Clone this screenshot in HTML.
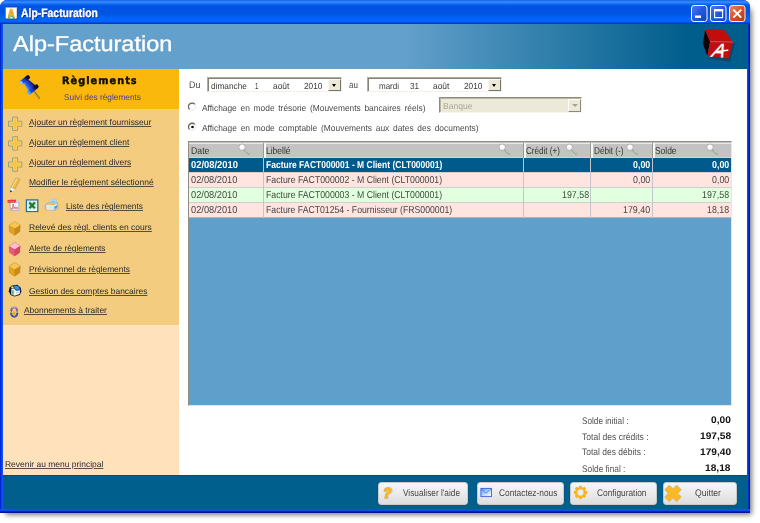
<!DOCTYPE html>
<html lang="fr">
<head>
<meta charset="utf-8">
<title>Alp-Facturation</title>
<style>
html,body{margin:0;padding:0;}
body{width:760px;height:523px;overflow:hidden;background:#fff;position:relative;
 font-family:"Liberation Sans",sans-serif;font-size:10px;color:#333;}
.a{position:absolute;}
.t{position:absolute;white-space:nowrap;text-rendering:geometricPrecision;line-height:12px;height:12px;transform-origin:0 0;}
#shadow{left:5px;top:6px;width:746.5px;height:508.5px;border-radius:6px 8px 3px 3px;background:rgba(0,0,0,.5);filter:blur(2.6px);}
#win{left:0;top:0;width:750px;height:513px;border-radius:7px 7px 0 0;overflow:hidden;
 background:linear-gradient(90deg,#0019cf 0,#0831d9 1px,#0a55ea 2px,#0a55ea 3px,#0a55ea 747px,#0940e0 748px,#001ac0 749px,#00138c 750px);}
#bbot{left:0;top:509px;width:750px;height:4px;background:linear-gradient(#0a55ea 0,#0a50e6 40%,#0325c4 62%,#001088 100%);}
#titlebar{left:0;top:0;width:750px;height:24px;
 background:linear-gradient(#1a60e8 0,#3390ff 9%,#0f66f2 17%,#0055e5 26%,#0054e0 55%,#005ef0 68%,#0066ff 80%,#0062f8 90%,#0040d8 96%,#002fbe 100%);}
#header{left:3px;top:24px;width:744px;height:45px;background:linear-gradient(90deg,#63a0cb 0,#63a0cb 54%,#005e8c 92%,#005e8c 100%);}
#left{left:3px;top:69px;width:176px;height:406px;background:#ffe2bc;}
#lhead{left:0;top:0;width:176px;height:40px;background:#fbb80c;}
#lmenu{left:0;top:40px;width:176px;height:216px;background:#f3cc80;}
#main{left:179px;top:69px;width:568px;height:406px;background:#fff;}
#footer{left:3px;top:475px;width:744px;height:34px;background:#005f8c;border-top:1px solid #004a8c;box-sizing:border-box;}
.date{height:15px;box-sizing:border-box;background:#fff;border:1px solid;border-color:#b3b0a0 #f4f2e8 #f4f2e8 #b3b0a0;box-shadow:inset 1px 1px 0 #84827a;}
.dbtn{width:13px;height:12px;box-sizing:border-box;background:#ece9d8;border:1px solid;border-color:#fbfaf4 #77756a #77756a #fbfaf4;}
.dbtn:after{content:"";position:absolute;left:3px;top:4px;border:2.5px solid transparent;border-top:3px solid #000;border-bottom:0;}
.radio{width:9px;height:9px;border-radius:50%;box-sizing:border-box;background:#fff;border:1px solid;border-color:#77776c #e8e6da #e8e6da #77776c;box-shadow:inset .6px .6px 0 #55554a;}
.btn{top:481.5px;height:23.5px;box-sizing:border-box;border-radius:3px;border:1px solid #c9c9c9;background:linear-gradient(#f6f6f6 0,#ececec 45%,#dddddd 100%);box-shadow:0 0 1px rgba(0,40,70,.6);}
.row{left:189px;width:542px;height:15px;}
.vl{top:158px;width:1px;height:60px;background:#c4c4cc;}
.hl{left:189px;width:542px;height:1px;background:#cfcfcf;}
.hs{top:143px;width:3px;height:15px;background:linear-gradient(90deg,#979797 0,#979797 1px,#f6f6f6 1px);}
</style>
</head>
<body>
<div id="shadow" class="a"></div>
<div id="win" class="a">
 <div id="bbot" class="a"></div>
 <div id="titlebar" class="a"></div>
 <div id="header" class="a"></div>
 <div id="left" class="a">
  <div id="lhead" class="a"></div>
  <div id="lmenu" class="a"></div>
 </div>
 <div id="main" class="a"></div>
 <div id="footer" class="a"></div>

 <!-- date pickers -->
 <div class="a date" style="left:207px;top:77px;width:135px;"></div>
 <div class="a dbtn" style="left:328px;top:79px;"></div>
 <div class="a date" style="left:367px;top:77px;width:135px;"></div>
 <div class="a dbtn" style="left:488px;top:79px;"></div>
 <!-- radios -->
 <!-- combo -->
 <div class="a" style="left:439px;top:97px;width:143px;height:16px;box-sizing:border-box;background:#ece9d8;border:1px solid;border-color:#8f8c7a #f8f6ee #f8f6ee #8f8c7a;box-shadow:inset 1px 1px 0 #b9b6a6;"></div>
 <div class="a" style="left:568px;top:99px;width:13px;height:13px;box-sizing:border-box;background:#ece9d8;border:1px solid;border-color:#fff #8a887a #8a887a #fff;"></div>
 <div class="a" style="left:571.8px;top:104px;border:3px solid transparent;border-top:3px solid #a5a292;border-bottom:0;"></div>

 <!-- grid -->
 <div class="a" style="left:188px;top:141px;width:544px;height:265px;box-sizing:border-box;background:#5f9fcb;border:1px solid;border-color:#8e8e84 #e9e7dc #e9e7dc #8e8e84;"></div>
 <div class="a" style="left:189px;top:142px;width:542px;height:16px;background:linear-gradient(#c0c0c0 0,#c0c0c0 1px,#e9e9e9 1px,#e9e9e9 2px,#c3c3c3 2px,#c3c3c3 15px,#d4d4d4 15px);"></div>
 <div class="a row" style="top:158px;background:#005b8c;height:14px"></div>
 <div class="a row" style="top:172px;background:#ffe4e0;height:15px"></div>
 <div class="a row" style="top:187px;background:#e2ffdf;height:16px"></div>
 <div class="a row" style="top:203px;background:#ffe4e0;height:15px"></div>
 <div class="a hl" style="top:172px;"></div>
 <div class="a hl" style="top:187px;"></div>
 <div class="a hl" style="top:202px;"></div>
 <div class="a hl" style="top:217px;background:#b5b5b5"></div>
 <div class="a vl" style="left:263px;"></div>
 <div class="a vl" style="left:523px;"></div>
 <div class="a vl" style="left:590px;"></div>
 <div class="a vl" style="left:652px;"></div>
 <div class="a hs" style="left:263px;"></div>
 <div class="a hs" style="left:523px;"></div>
 <div class="a hs" style="left:590px;"></div>
 <div class="a hs" style="left:652px;"></div>

 <!-- footer buttons -->
 <div class="a btn" style="left:378px;width:90px;"></div>
 <div class="a btn" style="left:477px;width:87px;"></div>
 <div class="a btn" style="left:570px;width:87px;"></div>
 <div class="a btn" style="left:663px;width:74px;"></div>

 <svg class="a" style="left:0;top:0" width="750" height="513" viewBox="0 0 750 513">
<defs>
 <linearGradient id="gb" x1="0" y1="0" x2="1" y2="1"><stop offset="0" stop-color="#4a7cf5"/><stop offset=".5" stop-color="#2457e0"/><stop offset="1" stop-color="#1840c0"/></linearGradient>
 <linearGradient id="gr" x1="0" y1="0" x2="1" y2="1"><stop offset="0" stop-color="#ee8a68"/><stop offset=".5" stop-color="#d9502c"/><stop offset="1" stop-color="#b8340f"/></linearGradient>
 <linearGradient id="gm" x1="0" y1="0" x2="1" y2="1"><stop offset="0" stop-color="#4aa2ff"/><stop offset=".55" stop-color="#b8dcff"/><stop offset="1" stop-color="#ffffff"/></linearGradient>
 <linearGradient id="pp" x1="0" y1="0" x2="0" y2="1"><stop offset="0" stop-color="#14060a"/><stop offset=".3" stop-color="#10103a"/><stop offset=".5" stop-color="#1a34c4"/><stop offset=".78" stop-color="#2458e4"/><stop offset="1" stop-color="#6cc4ff"/></linearGradient>
 <linearGradient id="pp2" x1="0" y1="0" x2="0" y2="1"><stop offset="0" stop-color="#0e0e34"/><stop offset=".35" stop-color="#1a34c4"/><stop offset=".7" stop-color="#2a66e8"/><stop offset="1" stop-color="#6cc4ff"/></linearGradient>
</defs>

<!-- app icon -->
<rect x="5.4" y="7.2" width="11.8" height="11.6" fill="#fffdf6" stroke="#16349c" stroke-width=".8"/>
<rect x="5.9" y="7.7" width="10.8" height="10.6" fill="none" stroke="#e8d7b8" stroke-width=".5"/>
<text transform="translate(11.4 17.6) scale(.8 1)" font-family="Liberation Sans, sans-serif" font-size="11.6" font-weight="bold" fill="#2f8f95" stroke="#2f8f95" stroke-width="1.1" text-anchor="middle" opacity=".85">A</text>
<text transform="translate(11.4 17.4) scale(.8 1)" font-family="Liberation Sans, sans-serif" font-size="11.4" font-weight="bold" fill="#fbb51a" stroke="#fbb51a" stroke-width=".5" text-anchor="middle">A</text>

<!-- window buttons -->
<rect x="691.5" y="5.5" width="15.5" height="16" rx="2.5" fill="url(#gb)" stroke="#f4f7ff" stroke-width="1"/>
<rect x="695" y="15.5" width="6" height="2.4" fill="#fff"/>
<rect x="710.5" y="5.5" width="15.5" height="16" rx="2.5" fill="url(#gb)" stroke="#f4f7ff" stroke-width="1"/>
<path d="M714.6 9.6 h8 v8 h-8 z" fill="none" stroke="#fff" stroke-width="1.1"/><rect x="714" y="9" width="9.2" height="2.4" fill="#fff"/>
<rect x="729.5" y="5.5" width="15.5" height="16" rx="2.5" fill="url(#gr)" stroke="#f9f1ee" stroke-width="1"/>
<path d="M733.3 9.6 L741.2 17.6 M741.2 9.6 L733.3 17.6" stroke="#fff" stroke-width="2" stroke-linecap="butt"/>

<!-- logo cube -->
<path d="M708 59 L730 61.5 L735 44 L733.5 43 Z" fill="#003a5c" opacity=".55"/>
<path d="M705.1 29.7 L702.9 43.4 L707.3 56.1 L710 41.6 Z" fill="#0d0505"/>
<path d="M705.1 29.7 L724 29.7 L732.9 42 L710 41.6 Z" fill="#c30d0d"/>
<path d="M710 41.6 L732.9 42 L728.9 58.8 L707.3 56.1 Z" fill="#be0f10"/>
<path d="M710 41.6 L732.9 42" stroke="#e06a6a" stroke-width=".7"/>
<text x="0" y="0" font-family="Liberation Sans, sans-serif" font-size="19.5" font-style="italic" fill="#fff" stroke="#fff" stroke-width=".25" transform="translate(711 56.8) rotate(3) skewX(-12)">A</text>
<path d="M716.5 51.4 L727.8 50.2" stroke="#fff" stroke-width="1.5" stroke-linecap="round"/>

<!-- pushpin -->
<g transform="translate(23.7 78.3) rotate(51)">
 <path d="M16 .9 L25.6 1.4" stroke="#d39a1a" stroke-width="1.6" stroke-linecap="round" opacity=".55"/>
 <path d="M16 0 L25.4 0" stroke="#7f8438" stroke-width="1.15" stroke-linecap="round"/>
 <rect x="-.2" y="-5.8" width="4.2" height="11.6" rx="1.7" fill="url(#pp)"/>
 <path d="M3.4 -2.8 L3.4 2.8 L12.8 4.6 L12.8 -4.6 Z" fill="url(#pp2)"/>
 <rect x="12.3" y="-6.8" width="4.2" height="13.4" rx="1.8" fill="url(#pp)"/>
 <path d="M.6 3.4 L3.2 3.4 L3.2 5.2 L.8 5.2 Z" fill="#9fe0ff"/>
 <path d="M13 3.4 L15.8 3.4 L15.8 5.8 L13.2 5.8 Z" fill="#59b6f4" opacity=".8"/>
</g>
<!-- plus icons -->
<g transform="translate(8.1 116.7)"><path d="M4.6 .4 h4.9 v4.2 h4.2 v4.9 h-4.2 v4.2 h-4.9 v-4.2 h-4.2 v-4.9 h4.2 z" fill="#f9c443" stroke="#8a9d90" stroke-width="1" stroke-linejoin="round"/><path d="M5.4 1.3 h3.3 v4.1 h4.1 v3.3 h-4.1 v4.1 h-3.3 v-4.1 h-4.1 v-3.3 h4.1 z" fill="none" stroke="#ffd870" stroke-width=".6"/></g>
<g transform="translate(8.1 136.4)"><path d="M4.6 .4 h4.9 v4.2 h4.2 v4.9 h-4.2 v4.2 h-4.9 v-4.2 h-4.2 v-4.9 h4.2 z" fill="#f9c443" stroke="#8a9d90" stroke-width="1" stroke-linejoin="round"/><path d="M5.4 1.3 h3.3 v4.1 h4.1 v3.3 h-4.1 v4.1 h-3.3 v-4.1 h-4.1 v-3.3 h4.1 z" fill="none" stroke="#ffd870" stroke-width=".6"/></g>
<g transform="translate(8.1 157.5)"><path d="M4.6 .4 h4.9 v4.2 h4.2 v4.9 h-4.2 v4.2 h-4.9 v-4.2 h-4.2 v-4.9 h4.2 z" fill="#f9c443" stroke="#8a9d90" stroke-width="1" stroke-linejoin="round"/><path d="M5.4 1.3 h3.3 v4.1 h4.1 v3.3 h-4.1 v4.1 h-3.3 v-4.1 h-4.1 v-3.3 h4.1 z" fill="none" stroke="#ffd870" stroke-width=".6"/></g>

<!-- pencil -->
<path d="M16.2 177.8 L20 179.4 L14.8 189.4 L10.8 187.6 Z" fill="#fbb92a" stroke="#a9a08e" stroke-width=".8" stroke-linejoin="round"/>
<path d="M17 178.6 L12 187.6" stroke="#fde09a" stroke-width="1.1"/>
<path d="M10.8 187.6 L14.8 189.4 L12.6 191.2 L10.2 190.4 Z" fill="#fff" stroke="#c4c4c4" stroke-width=".5"/>
<path d="M10.3 190.2 L12.6 191.1 L9.8 192.4 Z" fill="#0f3a6e"/>

<!-- pdf -->
<path d="M10.2 199.8 h5.8 l2.8 2.8 v7.6 h-8.6 z" fill="#f6f7fb" stroke="#97a2bd" stroke-width=".8"/>
<path d="M16 199.8 v2.8 h2.8" fill="#dbe1ee" stroke="#97a2bd" stroke-width=".6"/>
<rect x="7.6" y="199.9" width="8.2" height="2.8" fill="#e6212a"/>
<path d="M8.4 201.2 h6.4" stroke="#ff9a9a" stroke-width=".7"/>
<path d="M11.2 209.4 C12.6 207.6 13.8 205.6 13.4 204.2 C12.8 203.6 12.4 205 13.2 206.4 C14.2 208 16.2 208.8 17.8 208 C16.8 207.2 12.8 207.8 11.2 209.4 Z" fill="#f6c0c0" fill-opacity=".5" stroke="#e44848" stroke-width=".8"/>
<path d="M12 205.4 L16.8 209 M16.6 204.6 L12.2 208.6" stroke="#f0a0a0" stroke-width=".6" opacity=".7"/>

<!-- excel -->
<rect x="26.4" y="199.9" width="11.4" height="11.6" fill="#eef7ee" stroke="#24749c" stroke-width="1.3"/>
<rect x="27.7" y="201.2" width="8.8" height="8.2" fill="#dcecdc"/>
<path d="M29.4 202.6 L34.8 208.2 M34.8 202.6 L29.4 208.2" stroke="#1e7a32" stroke-width="2.3"/>
<path d="M29 202.4 L31 202.4 M33.4 202.4 L35.4 202.4" stroke="#2c9a46" stroke-width=".8"/>
<path d="M27.4 210.2 h9.4" stroke="#ffffff" stroke-width="1"/>

<!-- printer -->
<path d="M49.4 203.4 L51 199.3 L56.6 199.5 L56 203.8 Z" fill="#eef6ff" stroke="#8fb2d6" stroke-width=".6"/>
<path d="M51.8 200.3 L55.8 200.5 L55.4 202.6 L51 202.4 Z" fill="#6fb0ea"/>
<path d="M52.4 201 L55 201.2" stroke="#e8f4ff" stroke-width=".6"/>
<path d="M45.2 205 L48.8 202.8 L57.6 203.2 L57.8 208.4 L54 210.4 L45.2 209.6 Z" fill="#c9dcf0" stroke="#789cc4" stroke-width=".7"/>
<path d="M46.6 204.8 L49 203.6 L55.8 203.9 L53.6 205.3 Z" fill="#f7b23a"/>
<path d="M47.4 204.9 L53.2 205.1" stroke="#ffe09a" stroke-width=".6"/>
<path d="M46.2 205.9 L53.6 206.3 L57 204.4" stroke="#f6fbff" stroke-width=".8" fill="none"/>
<path d="M46.8 206.8 L53 207.2 L53 208.9 L46.8 208.5 Z" fill="#fbd98c"/>
<path d="M46.8 207.8 L53 208.2" stroke="#fff" stroke-width=".6"/>
<path d="M54.4 206.6 L57 205.2 L57 207.6 L54.4 209.3 Z" fill="#4f98da"/>
<path d="M46.2 209.4 L53.6 210" stroke="#eef4fb" stroke-width=".7"/>

<!-- cubes -->
<g transform="translate(9.2 221.8)"><path d="M5.5 0 L11 3.4 L10.5 9.8 L5.5 13.4 L.4 10 L0 3.6 Z" fill="#c98b17" stroke="#b98a2a" stroke-width=".7" stroke-linejoin="round"/><path d="M5.5 0 L11 3.4 L5.5 6.8 L0 3.6 Z" fill="#f9c654"/><path d="M0 3.6 L5.5 6.8 L5.5 13.4 L.4 10 Z" fill="#e3a321"/><path d="M11 3.4 L5.5 6.8 L5.5 13.4 L10.5 9.8 Z" fill="#c98b17"/></g>
<g transform="translate(9.2 242.6)"><path d="M5.5 0 L11 3.4 L10.5 9.8 L5.5 13.4 L.4 10 L0 3.6 Z" fill="#d5475f" stroke="#d07a86" stroke-width=".7" stroke-linejoin="round"/><path d="M5.5 0 L11 3.4 L5.5 6.8 L0 3.6 Z" fill="#f6c0cf"/><path d="M0 3.6 L5.5 6.8 L5.5 13.4 L.4 10 Z" fill="#ea5a72"/><path d="M11 3.4 L5.5 6.8 L5.5 13.4 L10.5 9.8 Z" fill="#d5475f"/></g>
<g transform="translate(9.2 262.8)"><path d="M5.5 0 L11 3.4 L10.5 9.8 L5.5 13.4 L.4 10 L0 3.6 Z" fill="#c98b17" stroke="#b98a2a" stroke-width=".7" stroke-linejoin="round"/><path d="M5.5 0 L11 3.4 L5.5 6.8 L0 3.6 Z" fill="#f9c654"/><path d="M0 3.6 L5.5 6.8 L5.5 13.4 L.4 10 Z" fill="#e3a321"/><path d="M11 3.4 L5.5 6.8 L5.5 13.4 L10.5 9.8 Z" fill="#c98b17"/></g>

<!-- bank -->
<path d="M12 285.4 L17.4 284.8 L20.8 287.8 L21.4 291.6 L19.8 295 L14.4 296.6 L10.6 295 L8.8 291.2 L9.6 287.6 Z" fill="#0c1036"/>
<path d="M11.4 288.4 L14.2 285.6 L18.4 285.8 L20.6 289.8 L16.2 290.6 L14.2 288.2 Z" fill="#1d74bb"/>
<path d="M14.2 286.2 L18 286.4 L19.4 288.6 L16 289.2 Z" fill="#3b96d6"/>
<path d="M11.6 288.8 L14 288.4 L16.2 290.8 L20.2 290.2 L19.6 294 L14.6 295.8 L11.4 294.2 Z" fill="#f4f6fa"/>
<path d="M14.2 289.6 L14.4 295.6 L11.4 294.2 L11.6 289 Z" fill="#cfd6e2"/>
<path d="M12.2 290.6 L13.4 290.8 L13.4 294.8 L12.2 294.2 Z" fill="#2fa54a"/>
<path d="M16 292 L19 291.4 L19 293 L16 293.8 Z" fill="#c6d3ea"/>
<circle cx="12.2" cy="287.4" r="1.1" fill="#f7e646"/>

<!-- subscriptions (refresh) -->
<path d="M11.4 310.6 C11 306.6 17 306 17 310.4" fill="none" stroke="#7d6aa8" stroke-width="1.9"/>
<path d="M10 310.2 L12.8 310.2 L11.4 312.2 Z M15.6 310.2 L18.4 310.2 L17 312.2 Z" fill="#6c5a9c"/>
<path d="M12 307.6 C13.4 306.8 15 306.8 16.4 307.6" stroke="#d8cfe8" stroke-width=".8" fill="none"/>
<path d="M11.2 312.6 C11 318 17.4 318 17.2 312.6" fill="none" stroke="#2b4fc2" stroke-width="2.1"/>
<path d="M13 311.4 h2.4 v2.4 h1.4 l-2.6 2.6 l-2.6 -2.6 h1.4 z" fill="#f8a91f"/>
<circle cx="9.6" cy="305.8" r=".9" fill="#f4d070"/><circle cx="19.2" cy="317.4" r="1" fill="#f4d070"/>


<!-- radios -->
<g fill="none" stroke-width="1.3">
 <circle cx="192.1" cy="106.6" r="3.6" fill="#fff" stroke="#efeee6"/>
 <path d="M189.5 109.2 A3.6 3.6 0 1 1 194.8 104.2" stroke="#6a6658"/>
 <circle cx="192.1" cy="126.8" r="3.6" fill="#fff" stroke="#efeee6"/>
 <path d="M189.5 129.4 A3.6 3.6 0 1 1 194.8 124.4" stroke="#6a6658"/>
</g>
<circle cx="192.5" cy="127" r="1.35" fill="#0a0a0a"/>

<!-- header magnifiers -->
<g transform="translate(238.4 143.8)"><circle cx="3.7" cy="3.5" r="3.3" fill="#efefef" stroke="#aaaaaa" stroke-width=".9"/><circle cx="3.3" cy="3.1" r="2.1" fill="#fdfdfd"/><path d="M6.3 6.1 L10.4 9.9" stroke="#a4a4a4" stroke-width="2.3" stroke-linecap="round"/><path d="M6.5 5.7 L10.6 9.3" stroke="#dadada" stroke-width=".9" stroke-linecap="round"/></g>
<g transform="translate(498.6 143.8)"><circle cx="3.7" cy="3.5" r="3.3" fill="#efefef" stroke="#aaaaaa" stroke-width=".9"/><circle cx="3.3" cy="3.1" r="2.1" fill="#fdfdfd"/><path d="M6.3 6.1 L10.4 9.9" stroke="#a4a4a4" stroke-width="2.3" stroke-linecap="round"/><path d="M6.5 5.7 L10.6 9.3" stroke="#dadada" stroke-width=".9" stroke-linecap="round"/></g>
<g transform="translate(565.8 143.8)"><circle cx="3.7" cy="3.5" r="3.3" fill="#efefef" stroke="#aaaaaa" stroke-width=".9"/><circle cx="3.3" cy="3.1" r="2.1" fill="#fdfdfd"/><path d="M6.3 6.1 L10.4 9.9" stroke="#a4a4a4" stroke-width="2.3" stroke-linecap="round"/><path d="M6.5 5.7 L10.6 9.3" stroke="#dadada" stroke-width=".9" stroke-linecap="round"/></g>
<g transform="translate(626.4 143.8)"><circle cx="3.7" cy="3.5" r="3.3" fill="#efefef" stroke="#aaaaaa" stroke-width=".9"/><circle cx="3.3" cy="3.1" r="2.1" fill="#fdfdfd"/><path d="M6.3 6.1 L10.4 9.9" stroke="#a4a4a4" stroke-width="2.3" stroke-linecap="round"/><path d="M6.5 5.7 L10.6 9.3" stroke="#dadada" stroke-width=".9" stroke-linecap="round"/></g>
<g transform="translate(706.4 143.8)"><circle cx="3.7" cy="3.5" r="3.3" fill="#efefef" stroke="#aaaaaa" stroke-width=".9"/><circle cx="3.3" cy="3.1" r="2.1" fill="#fdfdfd"/><path d="M6.3 6.1 L10.4 9.9" stroke="#a4a4a4" stroke-width="2.3" stroke-linecap="round"/><path d="M6.5 5.7 L10.6 9.3" stroke="#dadada" stroke-width=".9" stroke-linecap="round"/></g>

<!-- help ? -->
<text x="383.2" y="498.3" font-family="Liberation Sans, sans-serif" font-size="14" font-weight="bold" font-style="italic" fill="#b7c0cc" stroke="#b7c0cc" stroke-width="1.9" stroke-linejoin="round">?</text><text x="383.2" y="498.3" font-family="Liberation Sans, sans-serif" font-size="14" font-weight="bold" font-style="italic" fill="#fbb822" stroke="#fbb822" stroke-width="1" stroke-linejoin="round">?</text>
<!-- mail -->
<rect x="480.9" y="488.4" width="10.6" height="8.2" fill="url(#gm)" stroke="#3d5fe2" stroke-width=".9"/>
<path d="M481.4 488.9 L486 493.2 L491 488.9" fill="none" stroke="#5a62d8" stroke-width=".8"/>
<!-- gear -->
<g transform="translate(580.5 492.4)">
 <g fill="#fbb31c">
  <circle r="5.4"/>
  <rect x="-1.5" y="-6.7" width="3" height="13.4" rx=".7"/>
  <rect x="-1.5" y="-6.7" width="3" height="13.4" rx=".7" transform="rotate(45)"/>
  <rect x="-1.5" y="-6.7" width="3" height="13.4" rx=".7" transform="rotate(90)"/>
  <rect x="-1.5" y="-6.7" width="3" height="13.4" rx=".7" transform="rotate(135)"/>
 </g>
 <circle r="3.1" fill="#eeeeee" stroke="#c9d2e0" stroke-width=".5"/>
</g>
<!-- quit X -->
<g transform="translate(673 493.4) rotate(45)">
 <path d="M-2.6 -7.8 h5.2 v5.2 h5.2 v5.2 h-5.2 v5.2 h-5.2 v-5.2 h-5.2 v-5.2 h5.2 z" fill="#fbb828" stroke="#b9c2cc" stroke-width="2.2" stroke-linejoin="round"/><path d="M-2.6 -7.8 h5.2 v5.2 h5.2 v5.2 h-5.2 v5.2 h-5.2 v-5.2 h-5.2 v-5.2 h5.2 z" fill="#fbb828" stroke="#fbb828" stroke-width="1.3" stroke-linejoin="round"/>
</g>
</svg>


 <!-- big texts -->
 <span class="t" style="left:20.8px;top:6px;font-size:12.1px;line-height:14px;height:14px;font-weight:bold;color:#fff;-webkit-text-stroke:.3px #fff;text-shadow:1px 1px 0 #0a2a90;transform:scaleX(.86)">Alp-Facturation</span>
 <span class="t" style="left:13.4px;top:31px;font-size:21.6px;line-height:26px;height:26px;color:#fff;-webkit-text-stroke:.35px #fff;transform:scaleX(1.088)">Alp-Facturation</span>
 <span class="t" style="left:62.4px;top:75px;font-family:'DejaVu Sans','Liberation Sans',sans-serif;font-size:10.4px;line-height:13px;height:13px;font-weight:bold;color:#0c0c0c;letter-spacing:1.1px;-webkit-text-stroke:.4px #0c0c0c;transform:scaleX(.94)">Règlements</span>
<span class="t" style="left:28.9px;top:116px;transform:scaleX(1.006);color:#2b2b2b;font-size:8.4px;text-decoration:underline;text-underline-offset:1px;text-decoration-color:rgba(50,45,35,.8);">Ajouter un règlement fournisseur</span>
<span class="t" style="left:28.9px;top:136px;transform:scaleX(1.006);color:#2b2b2b;font-size:8.4px;text-decoration:underline;text-underline-offset:1px;text-decoration-color:rgba(50,45,35,.8);">Ajouter un règlement client</span>
<span class="t" style="left:28.9px;top:156px;transform:scaleX(0.997);color:#2b2b2b;font-size:8.4px;text-decoration:underline;text-underline-offset:1px;text-decoration-color:rgba(50,45,35,.8);">Ajouter un règlement divers</span>
<span class="t" style="left:28.9px;top:176px;transform:scaleX(1.014);color:#2b2b2b;font-size:8.4px;text-decoration:underline;text-underline-offset:1px;text-decoration-color:rgba(50,45,35,.8);">Modifier le règlement sélectionné</span>
<span class="t" style="left:66.3px;top:200px;transform:scaleX(0.996);color:#2b2b2b;font-size:8.4px;text-decoration:underline;text-underline-offset:1px;text-decoration-color:rgba(50,45,35,.8);">Liste des règlements</span>
<span class="t" style="left:28.9px;top:221px;transform:scaleX(1.015);color:#2b2b2b;font-size:8.4px;text-decoration:underline;text-underline-offset:1px;text-decoration-color:rgba(50,45,35,.8);">Relevé des règl. clients en cours</span>
<span class="t" style="left:28.9px;top:242px;transform:scaleX(0.990);color:#2b2b2b;font-size:8.4px;text-decoration:underline;text-underline-offset:1px;text-decoration-color:rgba(50,45,35,.8);">Alerte de règlements</span>
<span class="t" style="left:28.9px;top:263px;transform:scaleX(0.999);color:#2b2b2b;font-size:8.4px;text-decoration:underline;text-underline-offset:1px;text-decoration-color:rgba(50,45,35,.8);">Prévisionnel de règlements</span>
<span class="t" style="left:28.9px;top:285px;transform:scaleX(1.009);color:#2b2b2b;font-size:8.4px;text-decoration:underline;text-underline-offset:1px;text-decoration-color:rgba(50,45,35,.8);">Gestion des comptes bancaires</span>
<span class="t" style="left:23.7px;top:304px;transform:scaleX(1.006);color:#2b2b2b;font-size:8.4px;text-decoration:underline;text-underline-offset:1px;text-decoration-color:rgba(50,45,35,.8);">Abonnements à traiter</span>
<span class="t" style="left:5.0px;top:458px;transform:scaleX(1.011);color:#2b2b2b;font-size:8.4px;text-decoration:underline;text-underline-offset:1px;text-decoration-color:rgba(50,45,35,.8);">Revenir au menu principal</span>
<span class="t" style="left:63.7px;top:91px;transform:scaleX(0.990);color:#4a35a8;font-size:8.4px;">Suivi des règlements</span>
<span class="t" style="left:189.0px;top:80px;transform:scaleX(0.921);color:#4a4a4a;font-size:9.6px;">Du</span>
<span class="t" style="left:349.2px;top:80px;transform:scaleX(0.834);color:#4a4a4a;font-size:9.6px;">au</span>
<span class="t" style="left:210.8px;top:80px;transform:scaleX(0.943);color:#3a3a3a;font-size:8.8px;">dimanche</span>
<span class="t" style="left:255.2px;top:80px;transform:scaleX(0.693);color:#3a3a3a;font-size:8.8px;">1</span>
<span class="t" style="left:273.2px;top:80px;transform:scaleX(0.952);color:#3a3a3a;font-size:8.8px;">août</span>
<span class="t" style="left:303.6px;top:80px;transform:scaleX(0.940);color:#3a3a3a;font-size:8.8px;">2010</span>
<span class="t" style="left:378.5px;top:80px;transform:scaleX(0.909);color:#3a3a3a;font-size:8.8px;">mardi</span>
<span class="t" style="left:409.6px;top:80px;transform:scaleX(0.919);color:#3a3a3a;font-size:8.8px;">31</span>
<span class="t" style="left:433.0px;top:80px;transform:scaleX(0.952);color:#3a3a3a;font-size:8.8px;">août</span>
<span class="t" style="left:463.6px;top:80px;transform:scaleX(0.940);color:#3a3a3a;font-size:8.8px;">2010</span>
<span class="t" style="left:201.5px;top:102px;transform:scaleX(0.952);color:#4a4a4a;font-size:8.8px;word-spacing:1.5px;">Affichage en mode trésorie (Mouvements bancaires réels)</span>
<span class="t" style="left:201.5px;top:122px;transform:scaleX(0.955);color:#4a4a4a;font-size:8.8px;word-spacing:1.5px;">Affichage en mode comptable (Mouvements aux dates des documents)</span>
<span class="t" style="left:443.0px;top:100px;transform:scaleX(0.972);color:#aca899;font-size:8.8px;">Banque</span>
<span class="t" style="left:191.0px;top:146px;transform:scaleX(0.871);color:#333;">Date</span>
<span class="t" style="left:266.1px;top:146px;transform:scaleX(0.847);color:#333;">Libellé</span>
<span class="t" style="left:526.4px;top:146px;transform:scaleX(0.806);color:#333;">Crédit (+)</span>
<span class="t" style="left:594.0px;top:146px;transform:scaleX(0.817);color:#333;">Débit (-)</span>
<span class="t" style="left:655.3px;top:146px;transform:scaleX(0.841);color:#333;">Solde</span>
<span class="t" style="left:191.3px;top:160px;transform:scaleX(0.939);color:#fff;font-weight:bold;">02/08/2010</span>
<span class="t" style="left:265.9px;top:160px;transform:scaleX(0.849);color:#fff;font-weight:bold;">Facture FACT000001 - M Client (CLT000001)</span>
<span class="t" style="left:633.3px;top:160px;transform:scaleX(0.885);color:#fff;font-weight:bold;">0,00</span>
<span class="t" style="left:712.1px;top:160px;transform:scaleX(0.885);color:#fff;font-weight:bold;">0,00</span>
<span class="t" style="left:191.3px;top:175px;transform:scaleX(0.927);color:#444;">02/08/2010</span>
<span class="t" style="left:265.9px;top:175px;transform:scaleX(0.871);color:#444;">Facture FACT000002 - M Client (CLT000001)</span>
<span class="t" style="left:633.3px;top:175px;transform:scaleX(0.885);color:#444;">0,00</span>
<span class="t" style="left:712.1px;top:175px;transform:scaleX(0.885);color:#444;">0,00</span>
<span class="t" style="left:191.3px;top:190px;transform:scaleX(0.927);color:#3a4a3a;">02/08/2010</span>
<span class="t" style="left:265.9px;top:190px;transform:scaleX(0.871);color:#3a4a3a;">Facture FACT000003 - M Client (CLT000001)</span>
<span class="t" style="left:561.9px;top:190px;transform:scaleX(0.885);color:#3a4a3a;">197,58</span>
<span class="t" style="left:702.2px;top:190px;transform:scaleX(0.885);color:#3a4a3a;">197,58</span>
<span class="t" style="left:191.3px;top:205px;transform:scaleX(0.927);color:#444;">02/08/2010</span>
<span class="t" style="left:265.9px;top:205px;transform:scaleX(0.868);color:#444;">Facture FACT01254 - Fournisseur (FRS000001)</span>
<span class="t" style="left:623.4px;top:205px;transform:scaleX(0.885);color:#444;">179,40</span>
<span class="t" style="left:707.1px;top:205px;transform:scaleX(0.885);color:#444;">18,18</span>
<span class="t" style="left:581.7px;top:416px;transform:scaleX(0.855);color:#525252;font-size:9.6px;">Solde initial :</span>
<span class="t" style="left:581.7px;top:432px;transform:scaleX(0.892);color:#525252;font-size:9.6px;">Total des crédits :</span>
<span class="t" style="left:581.7px;top:447px;transform:scaleX(0.883);color:#525252;font-size:9.6px;">Total des débits :</span>
<span class="t" style="left:581.7px;top:464px;transform:scaleX(0.866);color:#525252;font-size:9.6px;">Solde final :</span>
<span class="t" style="left:711.0px;top:415px;transform:scaleX(1.060);color:#111;font-size:9.6px;font-weight:bold;">0,00</span>
<span class="t" style="left:699.7px;top:431px;transform:scaleX(1.060);color:#111;font-size:9.6px;font-weight:bold;">197,58</span>
<span class="t" style="left:699.7px;top:447px;transform:scaleX(1.060);color:#111;font-size:9.6px;font-weight:bold;">179,40</span>
<span class="t" style="left:705.3px;top:463px;transform:scaleX(1.060);color:#111;font-size:9.6px;font-weight:bold;">18,18</span>
<span class="t" style="left:403.0px;top:488px;transform:scaleX(0.861);color:#444;font-size:9.6px;">Visualiser l'aide</span>
<span class="t" style="left:498.7px;top:488px;transform:scaleX(0.868);color:#444;font-size:9.6px;">Contactez-nous</span>
<span class="t" style="left:597.0px;top:488px;transform:scaleX(0.867);color:#444;font-size:9.6px;">Configuration</span>
<span class="t" style="left:694.5px;top:488px;transform:scaleX(0.903);color:#444;font-size:9.6px;">Quitter</span>
</div>
</body>
</html>
